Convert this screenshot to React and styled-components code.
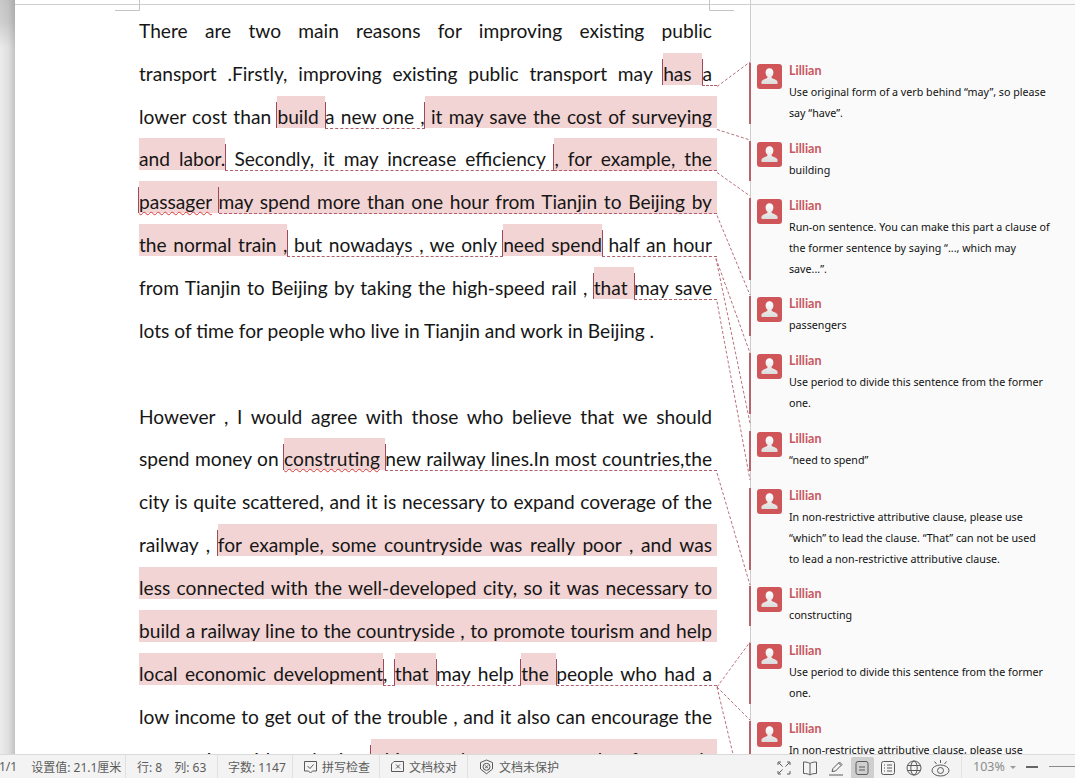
import React from "react";
import styled, { createGlobalStyle, css } from "styled-components";

const Global = createGlobalStyle`
  html, body { margin: 0; padding: 0; background: #fff; overflow: hidden; }
`;
const App_ = styled.div`
  width: 1075px; height: 778px; display: flex; flex-direction: column; overflow: hidden;
`;
const Workspace = styled.div`
  position: relative; flex: 1; min-height: 0; display: flex; overflow: hidden;
`;
const Gutter = styled.div`
  width: 15px; flex: none;
  background:
    linear-gradient(180deg, rgba(110,110,110,0.28) 0, rgba(110,110,110,0.22) 22px, rgba(110,110,110,0) 48px),
    linear-gradient(90deg, #ececec 0%, #e0e0e0 55%, #c2c2c2 100%);
`;
const Page = styled.div`
  width: 735px; flex: none; background: #fff; box-sizing: border-box; padding: 9.9px 38px 0 124px;
`;
const Line = styled.div`
  height: 42.86px; line-height: 42.86px; width: 573px; white-space: nowrap;
  font-family: "Lato", "Liberation Sans", sans-serif; font-size: 19.17px; color: #161616;
  text-align: justify;
  text-align-last: ${p => (p.$plain ? "left" : "justify")};
`;
const Run = styled.span`
  position: relative;
  padding: 9px 0 0;
  ${p => p.$hl && css`background: #f2d4d4;`}
  ${p => p.$dash && css`border-bottom: 1px dashed #b0606c; margin-bottom: -1px;`}
  ${p => p.$tail && css`padding-right: 5px; margin-right: -5px;`}
  ${p => p.$wavy && css`
    text-decoration: underline wavy #d83a3a 1px; text-underline-offset: 2px; text-decoration-skip-ink: none;
  `}
  ${p => p.$open && css`
    &::before { content: ""; position: absolute; left: -1px; bottom: 0; width: 1px; height: 26px; background: #9c4a58; }
  `}
  ${p => p.$close && css`
    &::after { content: ""; position: absolute; right: -1px; bottom: 0; width: 1px; height: 26px; background: #9c4a58; }
  `}
`;
const Sidebar = styled.aside`
  flex: 1; background: #fafafa; border-left: 1px solid #cdcdcd; box-sizing: border-box;
  padding-top: 63px; display: flex; flex-direction: column; gap: 16.78px;
`;
const Card = styled.div`
  margin-left: -2px; border-left: 2px solid #b8646c; padding-left: 6px; display: flex; gap: 7px;
`;
const AvatarBox = styled.div`
  width: 25px; height: 25px; flex: none; margin-top: 1px; border-radius: 3px; background: #d05558;
  display: flex; align-items: center; justify-content: center;
`;
const CardBody = styled.div`
  flex: 1; min-width: 0; font-family: "Noto Sans", "Liberation Sans", sans-serif;
`;
const Name = styled.div`
  font-family: "Lato", sans-serif; font-weight: 700; font-size: 12.5px; line-height: 15px; margin-bottom: 4px; color: #c8575f;
`;
const Text = styled.div`
  font-size: 10.7px; line-height: 21px; color: #111; white-space: nowrap;
`;
const Overlay = styled.svg`
  position: absolute; left: 0; top: 0; width: 1075px; height: 754px; pointer-events: none;
`;
const Status = styled.footer`
  height: 24px; flex: none; box-sizing: border-box; display: flex; align-items: stretch;
  background: #f3f3f3; border-top: 1px solid #dadada; overflow: hidden;
  font-family: "Noto Sans", "Noto Sans CJK SC", sans-serif; font-size: 12px; color: #5c5c5c;
`;
const Cell = styled.div`
  display: flex; align-items: center; gap: ${p => p.$gap}px; box-sizing: border-box; width: ${p => p.$w}px; flex: none;
  padding-left: ${p => p.$pad}px; white-space: nowrap; border-right: 1px solid ${p => (p.$last ? "transparent" : "#e0e0e0")};
  ${p => p.$shift && css`margin-left: -1px;`}
`;
const RightGroup = styled.div`
  margin-left: auto; display: flex; align-items: stretch;
`;
const Tool = styled.div`
  width: 26px; display: flex; align-items: center; justify-content: center; flex: none; box-sizing: border-box;
  margin-top: 2px; border-radius: 2px 2px 0 0;
  ${p => p.$on && css`
    width: 23px; margin-left: 1.5px; margin-right: 1.5px; background: #cfcfcf;
  `}
`;
const ToolDivider = styled.div`
  width: 1px; background: #e2e2e2; margin: 0 11px 0 8px;
`;
const Zoom = styled.div`
  display: flex; align-items: center; gap: 5px; width: 50px; color: #8c8c8c; font-size: 12.5px;
`;
const Caret = styled.i`
  width: 0; height: 0; border-left: 3px solid transparent; border-right: 3px solid transparent; border-top: 3px solid #999; margin-top: 1px;
`;
const SliderMinus = styled.div`
  width: 12px; height: 2px; background: #666; margin: 0 11px 0 3px; align-self: center; flex: none;
`;
const SliderTrack = styled.div`
  width: 26px; height: 1px; background: #8a8a8a; align-self: center; flex: none;
`;

const Avatar = () => (
  <AvatarBox>
    <svg width="19" height="19" viewBox="0 0 19 19">
      <defs>
        <linearGradient id="pg" x1="0" y1="0" x2="0" y2="1">
          <stop offset="0" stopColor="#ffffff" />
          <stop offset="1" stopColor="#dcdcdc" />
        </linearGradient>
      </defs>
      <path fill="url(#pg)" d="M9.5 1.2c2.4 0 3.9 1.8 3.9 4.2 0 1.8-.8 3.3-1.8 4.2v1.2c0 .6 4.2 1.5 5.4 2.9.6.7.6 1.6.6 2.5 0 .5-.3.7-.8.7H2.200c-.5 0-.8-.2-.8-.7 0-.9 0-1.800.6-2.500 1.200-1.400 5.400-2.300 5.400-2.900V9.600C6.400 8.700 5.600 7.200 5.600 5.400c0-2.400 1.500-4.200 3.900-4.200z" />
    </svg>
  </AvatarBox>
);

const comments = [
  ["Use original form of a verb behind “may”, so please", "say “have”."],
  ["building"],
  ["Run-on sentence. You can make this part a clause of", "the former sentence by saying “..., which may", "save...”."],
  ["passengers"],
  ["Use period to divide this sentence from the former", "one."],
  ["“need to spend”"],
  ["In non-restrictive attributive clause, please use", "“which” to lead the clause. “That” can not be used", "to lead a non-restrictive attributive clause."],
  ["constructing"],
  ["Use period to divide this sentence from the former", "one."],
  ["In non-restrictive attributive clause, please use", "“which” to lead the clause."],
];

const links = [
  "717,86.500 750,62",
  "717,129.500 750,140",
  "717,172.500 750,196",
  "717,215.500 750,295",
  "716,258.500 750,353",
  "716,258.500 750,423",
  "717,301.500 750,480",
  "717,473 750,585",
  "717,687 750,642",
  "717,687 750,720",
  "717,687 733,754",
];

const Ico = ({ w = 16, h = 16, vb = "0 0 16 16", children }) => (
  <svg width={w} height={h} viewBox={vb} fill="none" stroke="#5a5a5a" strokeWidth="1">{children}</svg>
);

export default function App() {
  return (
    <App_>
      <Global />
      <Workspace>
        <Gutter />
        <Page>
          <Line>There are two main reasons for improving existing public</Line>
          <Line>transport .Firstly, improving existing public transport may <Run $hl $open $close>has </Run><Run $dash $tail>a</Run></Line>
          <Line>lower cost than <Run $hl $open $close>build </Run><Run $dash>a new one ,</Run><Run $hl $open $tail> it may save the cost of surveying</Run></Line>
          <Line><Run $hl $close>and labor.</Run><Run $dash> Secondly, it may increase efficiency </Run><Run $hl $dash $open $tail>, for example, the</Run></Line>
          <Line><Run $hl $open $wavy>passager</Run><Run $hl> </Run><Run $hl $dash $open $tail>may spend more than one hour from Tianjin to Beijing by</Run></Line>
          <Line><Run $hl $close>the normal train ,</Run><Run $dash> but nowadays , we only </Run><Run $hl $open $close>need spend</Run><Run $dash $tail> half an hour</Run></Line>
          <Line>from Tianjin to Beijing by taking the high-speed rail , <Run $hl $open $close>that </Run><Run $dash $tail>may save</Run></Line>
          <Line $plain>lots of time for people who live in Tianjin and work in Beijing .</Line>
          <Line $plain>&nbsp;</Line>
          <Line>However , I would agree with those who believe that we should</Line>
          <Line>spend money on <Run $hl $open $wavy>construting</Run><Run $hl $close> </Run><Run $dash $tail>new railway lines.In most countries,the</Run></Line>
          <Line>city is quite scattered, and it is necessary to expand coverage of the</Line>
          <Line>railway , <Run $hl $open $tail>for example, some countryside was really poor , and was</Run></Line>
          <Line><Run $hl $tail>less connected with the well-developed city, so it was necessary to</Run></Line>
          <Line><Run $hl $tail>build a railway line to the countryside , to promote tourism and help</Run></Line>
          <Line><Run $hl $close>local economic development</Run><Run $dash>, </Run><Run $hl $open $close>that </Run><Run $dash>may help </Run><Run $hl $open $close>the </Run><Run $dash $tail>people who had a</Run></Line>
          <Line>low income to get out of the trouble , and it also can encourage the</Line>
          <Line>connection with each city ,<Run $hl $open $tail> this can also connect market for goods</Run></Line>
        </Page>
        <Sidebar>
          {comments.map((lines, i) => (
            <Card key={i}>
              <Avatar />
              <CardBody>
                <Name>Lillian</Name>
                {lines.map(l => <Text key={l}>{l}</Text>)}
              </CardBody>
            </Card>
          ))}
        </Sidebar>
        <Overlay viewBox="0 0 1075 754">
          <path d="M15 4.500H1075" stroke="#cfcfcf" fill="none" />
          <path d="M115 10.500H139.500V0M734 10.500H709.500V0" stroke="#c4c4c4" fill="none" />
          {links.map(p => (
            <polyline key={p} points={p} fill="none" stroke="#b0606c" strokeWidth="0.9" strokeDasharray="3 2" />
          ))}
        </Overlay>
      </Workspace>
      <Status>
        <Cell $w={127} $pad={0} $gap={14} $shift><span>1/1</span><span>设置值: 21.1厘米</span></Cell>
        <Cell $w={92} $pad={11} $gap={12}><span>行: 8</span><span>列: 63</span></Cell>
        <Cell $w={75} $pad={10} $gap={4}><span>字数: 1147</span></Cell>
        <Cell $w={87} $pad={10} $gap={4}>
          <Ico w={15} h={14} vb="0 0 15 14"><path d="M1.500 1.500h12v9.500H9.500L7.500 13l-2-2H1.500z" /><path d="M4.500 6l2.500 2.500 3.500-4" /></Ico>
          <span>拼写检查</span>
        </Cell>
        <Cell $w={88} $pad={10} $gap={4}>
          <Ico w={15} h={14} vb="0 0 15 14"><path d="M4 1.500h9.500v10H1.500V4z" /><path d="M6 4.500l4 4M10 4.500l-4 4" /></Ico>
          <span>文档校对</span>
        </Cell>
        <Cell $w={110} $pad={11} $gap={5} $last>
          <Ico w={15} h={16} vb="0 0 15 16"><path d="M7.500 1l6 2.500v6.500l-6 4.800-6-4.800V3.500z" /><circle cx="7.500" cy="7.800" r="3.500" /><path d="M6 6.300l3 3M9 6.300l-3 3" /></Ico>
          <span>文档未保护</span>
        </Cell>
        <RightGroup>
          <Tool>
            <Ico><path d="M2 5V2h3M11 2h3v3M14 11v3h-3M5 14H2v-3M6.500 6.500L3 3M9.500 6.500L13 3M6.500 9.500L3 13" /></Ico>
          </Tool>
          <Tool>
            <Ico><path d="M8 3.500C6.500 2.300 4 2 1.500 2v11.500c2.500 0 5 .3 6.500 1.500 1.500-1.200 4-1.500 6.500-1.500V2C12 2 9.500 2.300 8 3.500zM8 3.500V15" /></Ico>
          </Tool>
          <Tool>
            <Ico><path d="M4 11.500l1-3L11.500 2l2.500 2.500L7.500 11zM1 15h14" /><path d="M10.500 3l2.500 2.500" /></Ico>
          </Tool>
          <Tool $on>
            <Ico><rect x="2" y="1.500" width="12" height="13" rx="2" /><path d="M5 7h6M5 10h6" /></Ico>
          </Tool>
          <Tool>
            <Ico><rect x="1.500" y="1.500" width="13" height="13" rx="2" /><path d="M4 5h1M7 5h5M4 8h1M7 8h5M4 11h1M7 11h5" /></Ico>
          </Tool>
          <Tool>
            <Ico><circle cx="8" cy="8" r="7" /><ellipse cx="8" cy="8" rx="3.200" ry="7" /><path d="M1.500 5.500h13M1.500 10.500h13" /></Ico>
          </Tool>
          <Tool>
            <Ico w={19} h={18} vb="0 0 19 18"><ellipse cx="9.500" cy="11.500" rx="8.500" ry="5.500" /><circle cx="9.500" cy="11.500" r="3" /><path d="M9.500 1v3M3.500 2.500l2 2.500M15.500 2.500l-2 2.500" /></Ico>
          </Tool>
          <ToolDivider />
          <Zoom><span>103%</span><Caret /></Zoom>
          <SliderMinus />
          <SliderTrack />
        </RightGroup>
      </Status>
    </App_>
  );
}
